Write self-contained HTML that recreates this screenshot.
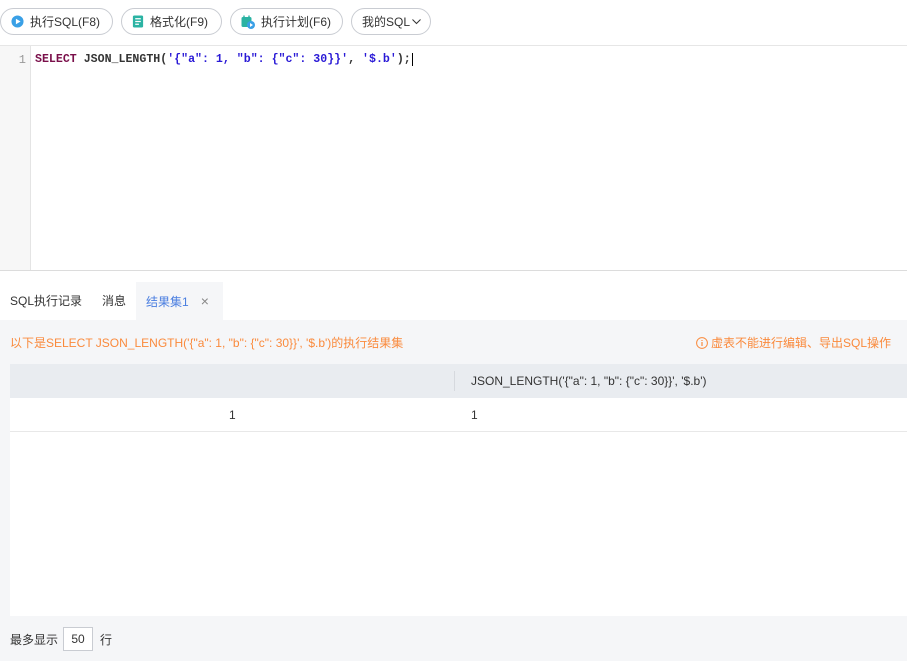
<!DOCTYPE html>
<html><head><meta charset="utf-8"><style>
*{box-sizing:border-box;margin:0;padding:0}
body{width:907px;height:661px;overflow:hidden;background:#fff;font-family:"Liberation Sans","Noto Sans CJK SC",sans-serif;font-size:12px;color:#333;position:relative}
.btn{position:absolute;top:8px;height:27px;border:1px solid #c9ccd2;border-radius:14px;display:flex;align-items:center;padding:0 10px;font-size:12px;color:#333;background:#fff;white-space:nowrap}
.btn svg{margin-right:6px}
.ed{position:absolute;top:45px;left:0;width:907px;height:226px;border-top:1px solid #e6e6e6;border-bottom:1px solid #dcdcdc}
.gut{position:absolute;left:0;top:0;width:31px;height:100%;background:#f7f7f7;border-right:1px solid #e4e4e4;color:#999;font-family:"Liberation Mono",monospace;font-size:12px;text-align:right;padding:7px 4px 0 0}
.code{position:absolute;left:35px;top:7px;font-family:"Liberation Mono","DejaVu Sans Mono",monospace;font-size:11.6px;font-weight:bold;white-space:pre;color:#333}
.kw{color:#7a0f4a}.st{color:#2a1ad6}
.tabs{position:absolute;top:282px;left:0;height:38px;width:907px}
.tab{position:absolute;top:0;height:38px;line-height:38px;font-size:12px;color:#333}
.panel{position:absolute;top:320px;left:0;width:907px;height:341px;background:#f5f6f8}
.msg{position:absolute;top:14px;left:10px;color:#fa8a3c;font-size:12px}
.warn{position:absolute;top:14px;right:16px;color:#fa8a3c;font-size:12px;display:flex;align-items:center}
.tbl{position:absolute;top:44px;left:10px;width:897px;height:252px;background:#fff}
.th{height:34px;background:#e9ecf0;position:relative}
.tr{height:34px;border-bottom:1px solid #e8e8e8;position:relative}
.foot{position:absolute;top:307px;left:10px;display:flex;align-items:center;font-size:12px;color:#333}
.inp{width:30px;height:24px;border:1px solid #c9ccd2;background:#fff;margin:0 7px 0 5px;text-align:center;line-height:22px;color:#333}
</style></head><body>
<div class="btn" style="left:0;width:113px"><svg width="13" height="13" viewBox="0 0 14 14"><circle cx="7" cy="7" r="6.5" fill="#3aa0e6"/><path d="M5.3 4v6l5-3z" fill="#fff"/></svg>执行SQL(F8)</div>
<div class="btn" style="left:121px;width:101px"><svg width="12" height="13" viewBox="0 0 12 14"><rect x="0.5" y="0.5" width="11" height="13" rx="1.5" fill="#2bb3a3"/><path d="M3 4h6M3 7h6M3 10h4" stroke="#fff" stroke-width="1.3"/></svg>格式化(F9)</div>
<div class="btn" style="left:230px;width:113px"><svg width="14" height="14" viewBox="0 0 14 14"><rect x="0.5" y="2" width="10" height="10" rx="1.5" fill="#2bb3a3"/><path d="M3 0.5v3M8 0.5v3" stroke="#2bb3a3" stroke-width="1.4"/><circle cx="10" cy="10" r="4" fill="#3aa0e6"/><path d="M9 8v4l3-2z" fill="#fff"/></svg>执行计划(F6)</div>
<div class="btn" style="left:351px;width:80px;padding:0 8px 0 10px">我的SQL<svg style="margin:0 0 0 2px" width="9" height="6" viewBox="0 0 9 6"><path d="M0.5 0.5l4 4 4-4" stroke="#333" fill="none"/></svg></div>
<div class="ed"><div class="gut">1</div>
<div class="code"><span class="kw">SELECT</span> JSON_LENGTH(<span class="st">'{"a": 1, "b": {"c": 30}}'</span>, <span class="st">'$.b'</span>);<span style="border-left:1px solid #000;margin-left:1px"></span></div></div>
<div class="tabs">
<div class="tab" style="left:10px">SQL执行记录</div>
<div class="tab" style="left:102px">消息</div>
<div class="tab" style="left:136px;width:87px;background:#f5f6f8;padding-left:10px;color:#4a7ee0">结果集1<span style="color:#888;margin-left:12px;font-size:14px">×</span></div>
</div>
<div class="panel">
<div class="msg">以下是SELECT JSON_LENGTH('{"a": 1, "b": {"c": 30}}', '$.b')的执行结果集</div>
<div class="warn"><svg width="12" height="12" viewBox="0 0 12 12" style="margin-right:3px"><circle cx="6" cy="6" r="5.4" fill="none" stroke="#fa8a3c"/><path d="M6 5v4M6 3v1" stroke="#fa8a3c" stroke-width="1.2"/></svg>虚表不能进行编辑、导出SQL操作</div>
<div class="tbl">
<div class="th"><div style="position:absolute;left:444px;top:7px;height:20px;border-left:1px solid #d6d9de"></div><div style="position:absolute;left:461px;top:10px">JSON_LENGTH('{"a": 1, "b": {"c": 30}}', '$.b')</div></div>
<div class="tr"><div style="position:absolute;left:219px;top:10px">1</div><div style="position:absolute;left:461px;top:10px">1</div></div>
</div>
<div class="foot">最多显示<div class="inp">50</div>行</div>
</div>
</body></html>
